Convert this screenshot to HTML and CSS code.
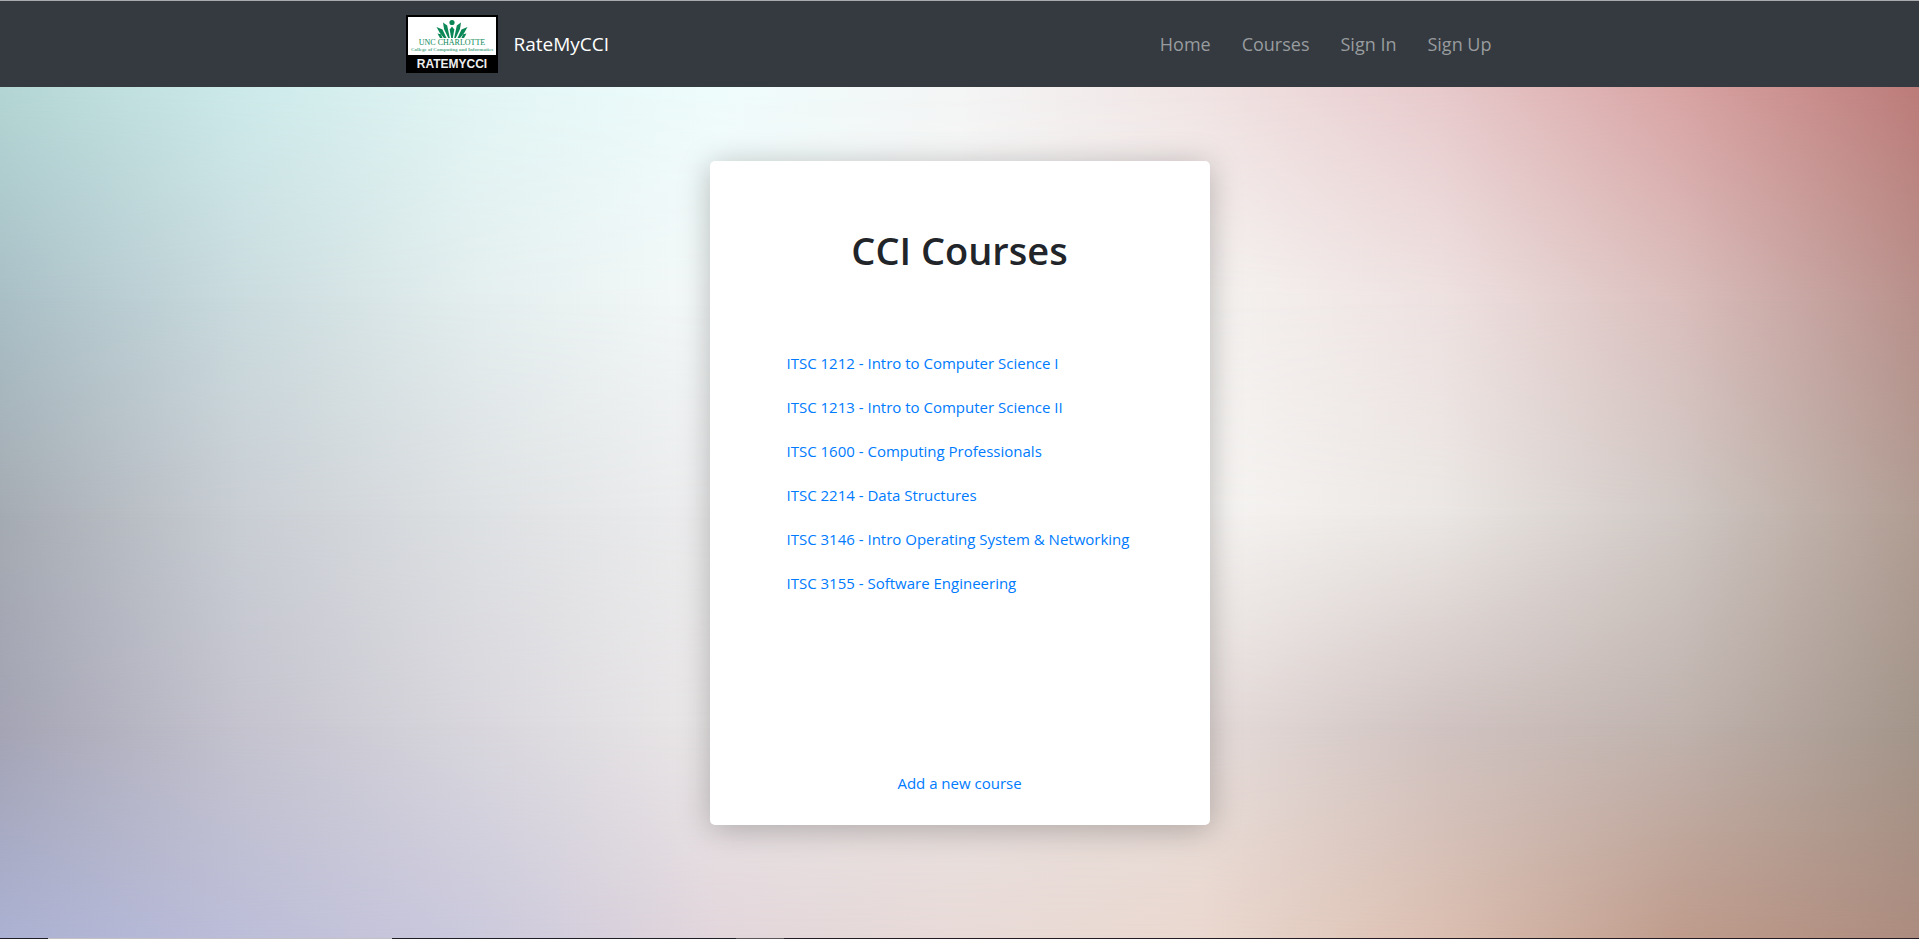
FILE: index.html
```html
<!DOCTYPE html>
<html lang="en">
<head>
<meta charset="utf-8">
<meta name="viewport" content="width=device-width, initial-scale=1">
<title>RateMyCCI</title>
<link rel="stylesheet" href="styles.css">
</head>
<body class="page">
<header class="navbar">
  <div class="container">
    <a class="brand" href="#">
      <svg class="logo" viewBox="0 0 92 58" role="img" aria-label="UNC Charlotte College of Computing and Informatics">
        <rect width="92" height="58" fill="#000"/>
        <rect x="2" y="2" width="88" height="38" fill="#fff"/>
        <g fill="#0b8757">
          <circle cx="46" cy="7.500" r="2.600"/>
          <path d="M46 11.500l2.300 3-1.500 8.500h-1.600l-1.500-8.500z"/>
          <path d="M37 7.500l4.200 3 2.600 12.500h-1.600l-4.200-9z"/>
          <path d="M55 7.500l-4.200 3-2.600 12.500h1.600l4.200-9z"/>
          <path d="M30.500 12l6 2.500 4 8.500h-2.600l-4-5z"/>
          <path d="M61.500 12l-6 2.500-4 8.500h2.600l4-5z"/>
          <path d="M31.500 18.500l3.500.8 1.500 3.700h-2.500z"/>
          <path d="M60.500 18.500l-3.500.8-1.500 3.700h2.500z"/>
        </g>
        <text class="logo-name" x="46" y="30">UNC CHARLOTTE</text>
        <text class="logo-college" x="46" y="36">College of Computing and Informatics</text>
        <text class="logo-title" x="46" y="53">RATEMYCCI</text>
      </svg>
      <span>RateMyCCI</span>
    </a>
    <nav class="nav">
      <a class="nav-link" href="#">Home</a>
      <a class="nav-link" href="#">Courses</a>
      <a class="nav-link" href="#">Sign In</a>
      <a class="nav-link" href="#">Sign Up</a>
    </nav>
  </div>
</header>
<main class="main">
  <div class="wash wash-1"></div>
  <div class="wash wash-2"></div>
  <div class="wash wash-3"></div>
  <div class="wash wash-4"></div>
  <section class="card">
    <h1 class="title">CCI Courses</h1>
    <ul class="courses">
      <li><a class="link" href="#">ITSC 1212 - Intro to Computer Science I</a></li>
      <li><a class="link" href="#">ITSC 1213 - Intro to Computer Science II</a></li>
      <li><a class="link" href="#">ITSC 1600 - Computing Professionals</a></li>
      <li><a class="link" href="#">ITSC 2214 - Data Structures</a></li>
      <li><a class="link" href="#">ITSC 3146 - Intro Operating System &amp; Networking</a></li>
      <li><a class="link" href="#">ITSC 3155 - Software Engineering</a></li>
    </ul>
    <a class="link add" href="#">Add a new course</a>
  </section>
</main>
<div class="edge"></div>
</body>
</html>
```
FILE: styles.css
```css
* { box-sizing: border-box; }

.page {
  margin: 0;
  min-height: 100vh;
  display: flex;
  flex-direction: column;
  font-family: "Segoe UI", "Open Sans", sans-serif;
  font-size: 15px;
  line-height: 24px;
  color: #212529;
}

.navbar {
  background: #343a40;
  border-top: 1px solid #a9abae;
  padding: 14px 0;
}

.container {
  max-width: 1140px;
  margin: 0 auto;
  padding: 0 16px;
  display: flex;
  align-items: center;
  justify-content: space-between;
}

.brand {
  display: flex;
  align-items: center;
  gap: 16px;
  color: #fff;
  font-size: 19px;
  text-decoration: none;
}

.logo { display: block; width: 92px; height: 58px; }
.logo text { text-anchor: middle; }
.logo-name { font: 8px "Liberation Serif", serif; fill: #0b8757; }
.logo-college { font: bold 5px "Liberation Serif", serif; fill: #5fae90; }
.logo-title { font: bold 12px "Liberation Sans", sans-serif; fill: #eee; }

.nav { display: flex; gap: 31px; padding-right: 22px; }
.nav-link { color: #999c9f; font-size: 18px; text-decoration: none; }

/* Backdrop: horizontal colour rows blended into each other vertically */
.main {
  position: relative;
  flex: 1;
  display: flex;
  justify-content: center;
  align-items: flex-start;
  padding: 74px 16px 112px;
  background: linear-gradient(to right, #b3d6d4, #cdeaea, #e2f6f5, #effcfc, #f4f5f5, #f1e4e4, #e8cacc, #d9a4a4, #bc7c79);
}

.wash { position: absolute; inset: 0; }
.wash-1 {
  background: linear-gradient(to right, #a9bfc6, #cadbde, #e4eeee, #f5f9f9, #f8f8f7, #f5f3f1, #eee2e1, #dabfbd, #b8908b);
  mask-image: linear-gradient(transparent 0%, #000 25%);
}
.wash-2 {
  background: linear-gradient(to right, #a5abb2, #c9ced4, #dee1e3, #eeeeef, #f0eeed, #f6f4f2, #ebe7e4, #d0c8c4, #b09c92);
  mask-image: linear-gradient(transparent 25%, #000 50%);
}
.wash-3 {
  background: linear-gradient(to right, #a4a4b4, #c4c3ce, #d9d7dd, #ebe8e8, #e8e4e2, #e6dddb, #d0c3c1, #c0b3ae, #a3958a);
  mask-image: linear-gradient(transparent 50%, #000 75%);
}
.wash-4 {
  background: linear-gradient(to right, #abb1d2, #bcbdd8, #cbc9dc, #e2d6db, #e8dad7, #ead8cf, #dbbfb1, #bf9c8c, #ac8c7f);
  mask-image: linear-gradient(transparent 75%, #000 100%);
}

.card {
  position: relative;
  width: 100%;
  max-width: 500px;
  padding: 64px 32px 30px;
  display: flex;
  flex-direction: column;
  background: #fff;
  border-radius: 5px;
  box-shadow: 0 4px 32px rgba(0, 0, 0, 0.26);
}

.title {
  margin: 0 0 76px;
  font-size: 38px;
  line-height: 50px;
  font-weight: 600;
  text-align: center;
}

.courses {
  margin: 0 0 176px;
  padding: 0 0 0 45px;
  list-style: none;
  display: grid;
  gap: 20px;
}

.link { color: #007bff; text-decoration: none; }
.link:hover { text-decoration: underline; }
.add { align-self: center; }

.edge {
  height: 1px;
  background: linear-gradient(to right, #1f1d26 48px, #c3c0c6 48px 392px, #1f1d26 392px 736px, #5a5558 736px 784px, #241a24 784px);
}
```
